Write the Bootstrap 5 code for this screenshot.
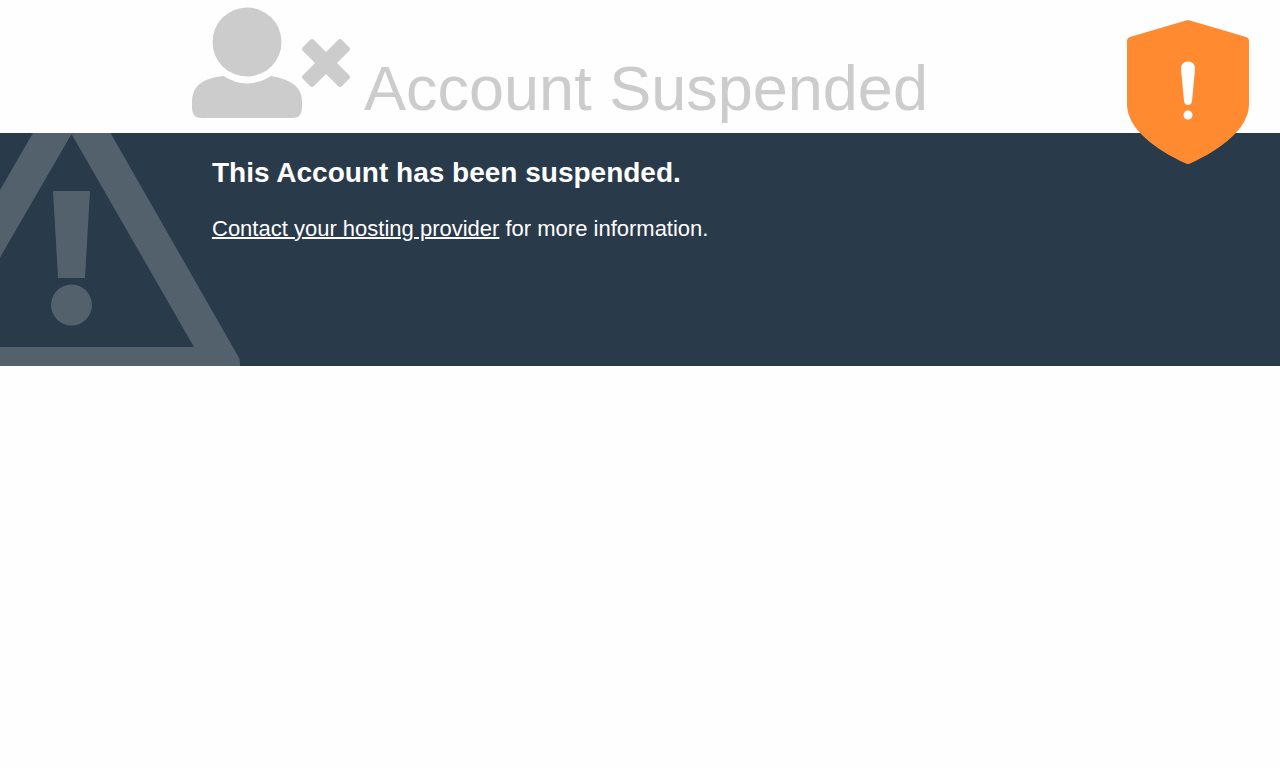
<!DOCTYPE html>
<html lang="en">
<head>
<meta charset="utf-8">
<meta name="viewport" content="width=device-width, initial-scale=1">
<title>Account Suspended</title>
<link href="https://cdn.jsdelivr.net/npm/bootstrap@5.3.0/dist/css/bootstrap.min.css" rel="stylesheet">
<style>
body { font-family: "Liberation Sans", Arial, sans-serif; background: #fefefe; }
.gutter-start { padding-left: 15%; }
.page-header { padding-top: 7px; column-gap: 14px; }
.page-title { font-size: 63px; line-height: 72px; color: #ccc; margin-bottom: 9px; }
.user-icon { width: 158px; height: 111px; margin-bottom: 15px; fill: #ccc; }
.notice { background: #293a4a; min-height: 233px; }
.notice-copy { padding: 23px 20px; }
.notice-copy h2 { font-size: 28px; line-height: 34px; font-weight: 700; }
.notice-copy p { font-size: 22px; line-height: 30px; }
.notice-copy a { text-decoration-thickness: 2px; }
.warning-mark { width: 240px; height: 233px; fill: #53616d; }
.shield { width: 122px; height: 144px; top: 20px; right: 31px; }
</style>
</head>
<body>
<div class="position-relative">
  <header class="page-header gutter-start d-flex flex-wrap align-items-end">
    <svg class="user-icon flex-shrink-0" viewBox="192 7 158 111" aria-hidden="true">
      <circle cx="247" cy="42" r="34.5"/>
      <path d="M223.500 76Q247 91 271 76Q302 81 302 101V108Q302 118 292 118H202Q192 118 192 108V101Q192 79 223.500 76Z"/>
      <path d="M310 40Q312 38 314 40L326 52L338 40Q340 38 342 40L349 47Q351 49 349 51L337 63L349 75Q351 77 349 79L342 86Q340 88 338 86L326 74L314 86Q312 88 310 86L303 79Q301 77 303 75L315 63L303 51Q301 49 303 47Z"/>
    </svg>
    <h1 class="page-title fw-normal">Account Suspended</h1>
  </header>
  <main class="notice gutter-start position-relative text-white overflow-hidden">
    <svg class="warning-mark position-absolute bottom-0 start-0" viewBox="0 133 240 233" aria-hidden="true">
      <path fill-rule="evenodd" d="M0 190L33 133H110.500L238 356Q240 359 240 364V366H0V347H194L71.500 134L0 257.500Z"/>
      <path d="M53 191H90L85 278H58Z"/>
      <circle cx="71.500" cy="305" r="20.500"/>
    </svg>
    <div class="notice-copy position-relative">
      <h2 class="mb-4">This Account has been suspended.</h2>
      <p class="mb-0"><a href="#" class="text-white">Contact your hosting provider</a> for more information.</p>
    </div>
  </main>
  <svg class="shield position-absolute" viewBox="1127 20 122 144" role="img" aria-label="Warning">
    <path fill="#ff8a30" d="M1186 20.400Q1188 19.600 1190 20.400L1246 37Q1249 38 1249 41V104C1249 129 1220 150 1190 163.500Q1188 164.500 1186 163.500C1156 150 1127 129 1127 104V41Q1127 38 1130 37Z"/>
    <path fill="#fff" d="M1181 69Q1181 61.500 1188 61.500T1195 69L1192 101Q1191.500 105 1188 105T1184 101Z"/>
    <circle fill="#fff" cx="1188" cy="115" r="4.500"/>
  </svg>
</div>
<script src="https://cdn.jsdelivr.net/npm/bootstrap@5.3.0/dist/js/bootstrap.bundle.min.js"></script>
</body>
</html>
